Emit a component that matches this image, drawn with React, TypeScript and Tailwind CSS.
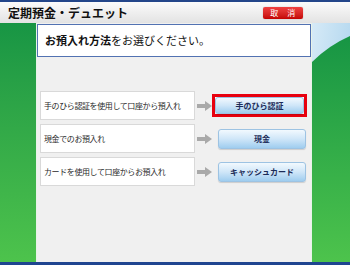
import React from "react";

const JP = { fontFamily: '"Noto Sans CJK JP", "Noto Sans", sans-serif' };

function Arrow() {
  return (
    <svg width="15" height="10" viewBox="0 0 15 10" className="ml-[2px] shrink-0">
      <rect x="0" y="3" width="9" height="4" fill="#a9a9a9" />
      <polygon points="8,0 15,5 8,10" fill="#a9a9a9" />
    </svg>
  );
}

function Btn({ label, cls }: { label: string; cls: string }) {
  return (
    <div
      className={
        "flex items-center justify-center rounded-[3px] border border-[#9dc3e3] bg-gradient-to-b from-[#f2f9fe] via-[#cfe6f8] to-[#9fcdef] text-[8px] font-bold text-[#1c2c58] shadow-[0_1px_1px_rgba(0,0,0,0.15)] " +
        cls
      }
    >
      {label}
    </div>
  );
}

function Row({ text, btn, selected }: { text: string; btn: string; selected?: boolean }) {
  return (
    <div className="flex h-[29px] items-center">
      <div className="flex h-full w-[155px] items-center border border-[#d9d9d9] bg-white pl-[3px] text-[8px] tracking-[-0.4px] text-[#2a2a2a]">
        {text}
      </div>
      <Arrow />
      <div className="flex w-[95px] items-center">
        {selected ? (
          <div className="h-[23px] w-[95px] border-[3px] border-[#e8000f] bg-white">
            <Btn label={btn} cls="h-full w-full" />
          </div>
        ) : (
          <Btn label={btn} cls="ml-[6px] h-[20px] w-[88px]" />
        )}
      </div>
    </div>
  );
}

export default function App() {
  return (
    <div className="flex h-[265px] w-[350px] flex-col overflow-hidden bg-white" style={JP}>
      <div className="h-[2px] bg-[#23468a]" />
      <div className="flex h-[21px] items-center justify-between bg-gradient-to-b from-[#fbfbfb] to-[#e3e3e3] pl-[8px] pr-[47px]">
        <div className="text-[12px] font-bold leading-none text-[#111]">定期預金・デュエット</div>
        <div className="flex h-[12px] w-[40px] items-center justify-center rounded-[2px] bg-gradient-to-b from-[#f04040] to-[#c40000] text-[8px] leading-none tracking-[0.5px] text-white shadow-[0_0_1px_rgba(0,0,0,0.4)]">
          取　消
        </div>
      </div>
      <div className="flex flex-1">
        <div className="w-[36px] bg-gradient-to-b from-[#179544] to-[#4dc34c]" />
        <div className="w-[1px] bg-[#e8f3e8]" />
        <div className="flex w-[274px] flex-col bg-[#f0f0f0]">
          <div className="mt-[1px] flex h-[33px] items-center border border-[#5272b2] bg-white pl-[7px] text-[11px] text-[#111]">
            <span className="font-bold">お預入れ方法</span>
            <span>をお選びください。</span>
          </div>
          <div className="mt-[34px] flex flex-col gap-[4px] pl-[3px]">
            <Row text="手のひら認証を使用して口座から預入れ" btn="手のひら認証" selected />
            <Row text="現金でのお預入れ" btn="現金" />
            <Row text="カードを使用して口座からお預入れ" btn="キャッシュカード" />
          </div>
        </div>
        <div className="w-[1px] bg-[#e8f3e8]" />
        <svg width="38" height="239" viewBox="0 0 38 239" className="block shrink-0">
          <defs>
            <linearGradient id="lb" x1="0" y1="0" x2="1" y2="1">
              <stop offset="0" stopColor="#d6eaf7" />
              <stop offset="1" stopColor="#9ccbe9" />
            </linearGradient>
            <linearGradient id="gr" x1="0" y1="0" x2="0" y2="1">
              <stop offset="0" stopColor="#179544" />
              <stop offset="1" stopColor="#4dc34c" />
            </linearGradient>
          </defs>
          <rect x="0" y="0" width="38" height="239" fill="url(#lb)" />
          <path d="M 0 39 A 124.5 124.5 0 0 1 38 13 L 38 239 L 0 239 Z" fill="url(#gr)" />
        </svg>
      </div>
      <div className="h-[3px] bg-[#1f4590]" />
    </div>
  );
}
